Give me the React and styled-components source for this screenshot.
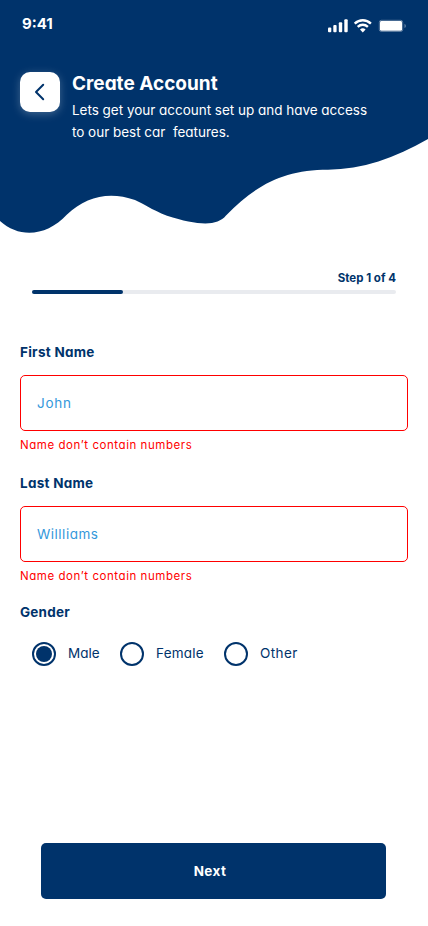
import React, { useState } from "react";
import styled, { createGlobalStyle } from "styled-components";

const navy = "#00336b";

const GlobalStyle = createGlobalStyle`
  *, *::before, *::after { box-sizing: border-box; }
  body {
    margin: 0;
    background: #fff;
    color: ${navy};
    font-family: Gilroy, Inter, "Liberation Sans", sans-serif;
    font-feature-settings: "cv11";
  }
`;

const Screen = styled.div`
  width: 428px;
  height: 926px;
  display: flex;
  flex-direction: column;
  overflow: hidden;
`;

const Header = styled.header`
  position: relative;
  height: 234px;
  flex: none;
  color: #fff;
`;

const Wave = styled.svg`
  position: absolute;
  inset: 0;
  z-index: -1;
`;

const StatusBar = styled.div`
  display: flex;
  justify-content: space-between;
  height: 48px;
  padding: 14px 21px 0 22px;
`;

const Clock = styled.time`
  font-size: 15px;
  font-weight: 700;
  line-height: 20px;
`;

const StatusIcons = styled.svg`
  display: block;
  margin-top: 4px;
`;

const Intro = styled.div`
  display: flex;
  gap: 12px;
  padding: 24px 20px 0;
`;

const BackButton = styled.button`
  width: 40px;
  height: 40px;
  flex: none;
  display: grid;
  place-items: center;
  padding: 0;
  border: 0;
  border-radius: 10px;
  background: #fff;
  box-shadow: 0 2px 8px rgba(255, 255, 255, 0.25);
`;

const Heading = styled.h1`
  margin: 0;
  font-size: 19px;
  font-weight: 700;
  line-height: 24px;
`;

const Subtitle = styled.p`
  margin: 3px 0 0;
  font-size: 13.5px;
  line-height: 22px;
  letter-spacing: -0.02px;
  white-space: pre;
`;

const Progress = styled.section`
  margin: 36px 32px 0;
`;

const StepLabel = styled.div`
  font-size: 11.5px;
  font-weight: 700;
  line-height: 16px;
  text-align: right;
`;

const Track = styled.div`
  height: 4px;
  margin-top: 4px;
  border-radius: 2px;
  background: #e9ebef;
`;

const Fill = styled.div`
  width: 25%;
  height: 100%;
  border-radius: 2px;
  background: ${navy};
`;

const Form = styled.form`
  flex: 1;
  display: flex;
  flex-direction: column;
  padding: 50px 20px 27px;
`;

const Field = styled.div`
  display: flex;
  flex-direction: column;
  height: 131px;
`;

const Label = styled.label`
  font-size: 13.5px;
  font-weight: 700;
  line-height: 16px;
  letter-spacing: 0.27px;
`;

const Input = styled.input`
  width: 100%;
  height: 56px;
  margin-top: 15px;
  padding: 0 16px;
  border: 1px solid #f00;
  border-radius: 5px;
  outline: 0;
  background: #fff;
  font: inherit;
  font-size: 13.5px;
  font-feature-settings: inherit;
  letter-spacing: ${(p) => p.$tracking}px;
  &::placeholder { color: #3498db; opacity: 1; }
`;

const ErrorText = styled.div`
  margin-top: 6px;
  color: #f00;
  font-size: 11.5px;
  line-height: 16px;
  letter-spacing: 0.55px;
`;

const GroupLabel = styled.div`
  margin-top: -2px;
  font-size: 13.5px;
  font-weight: 700;
  line-height: 16px;
  letter-spacing: 0.2px;
`;

const Options = styled.div`
  display: grid;
  grid-template-columns: 88px 104px auto;
  margin: 22px 0 0 12px;
`;

const Option = styled.label`
  display: flex;
  align-items: center;
  gap: 12px;
  font-size: 13.5px;
  line-height: 22px;
  letter-spacing: ${(p) => p.$tracking}px;
`;

const OptionText = styled.span`
  margin-top: -2px;
`;

const Radio = styled.input`
  appearance: none;
  width: 24px;
  height: 24px;
  flex: none;
  display: grid;
  place-items: center;
  margin: 0;
  border: 2px solid ${navy};
  border-radius: 50%;
  &:checked::before {
    content: "";
    width: 16px;
    height: 16px;
    border-radius: 50%;
    background: ${navy};
  }
`;

const NextButton = styled.button`
  height: 56px;
  margin: auto 22px 0 21px;
  padding: 0 7px 0 0;
  border: 0;
  border-radius: 5px;
  background: ${navy};
  color: #fff;
  font: inherit;
  font-size: 13.5px;
  font-weight: 700;
  letter-spacing: 0.4px;
`;

function NameField({ id, label, placeholder, tracking }) {
  return (
    <Field>
      <Label htmlFor={id}>{label}</Label>
      <Input id={id} placeholder={placeholder} $tracking={tracking} />
      <ErrorText>Name don’t contain numbers</ErrorText>
    </Field>
  );
}

const genders = [
  { name: "Male", tracking: 0 },
  { name: "Female", tracking: 0.2 },
  { name: "Other", tracking: 0.4 },
];

export default function App() {
  const [gender, setGender] = useState("Male");
  return (
    <>
      <GlobalStyle />
      <Screen>
        <Header>
          <Wave width="428" height="234" viewBox="0 0 428 234">
            <path
              fill={navy}
              d="M0 0H428V139C395 158 362 169.5 328 169.7C285 170 258 183 226 215.5C217 226.5 198 225.5 167 215.7C151 209.5 143 203.5 135 200C110 191 86 196 67 214.5C47 236 20 239 0 221Z"
            />
          </Wave>
          <StatusBar>
            <Clock>9:41</Clock>
            <StatusIcons width="80" height="16" viewBox="327 18 80 16">
              <g fill="#fff">
                <rect x="328" y="27.6" width="3.3" height="4.6" rx="1" />
                <rect x="333.3" y="25" width="3.3" height="7.2" rx="1" />
                <rect x="338.8" y="22.2" width="3.4" height="10" rx="1" />
                <rect x="344.3" y="19.3" width="3.4" height="12.9" rx="1" />
                <rect x="380" y="21" width="22" height="9.8" rx="1.4" />
              </g>
              <rect x="379.3" y="20.3" width="23.4" height="11.2" rx="2" fill="none" stroke="#fff" strokeOpacity="0.35" />
              <path d="M404.5 23.8v4.2q1.4-.7 1.4-2.1t-1.4-2.1z" fill="#fff" fillOpacity="0.4" />
              <g fill="none" stroke="#fff" strokeWidth="2.4">
                <path d="M354.7 23.6Q358.3 20.2 362.8 20.2T370.9 23.6" />
                <path d="M357.7 26.8Q360 24.7 362.8 24.7T367.9 26.8" />
              </g>
              <path d="M360 29.5Q362.8 27.1 365.6 29.5L362.8 32.4Z" fill="#fff" />
            </StatusIcons>
          </StatusBar>
          <Intro>
            <BackButton aria-label="Back">
              <svg width="40" height="40" viewBox="0 0 40 40" fill="none">
                <path d="M23.2 12.8L16 20L23.2 27.2" stroke={navy} strokeWidth="2" strokeLinecap="round" strokeLinejoin="round" />
              </svg>
            </BackButton>
            <div>
              <Heading>Create Account</Heading>
              <Subtitle>{"Lets get your account set up and have access\nto our best car  features."}</Subtitle>
            </div>
          </Intro>
        </Header>
        <Progress>
          <StepLabel>Step 1 of 4</StepLabel>
          <Track>
            <Fill />
          </Track>
        </Progress>
        <Form onSubmit={(e) => e.preventDefault()}>
          <NameField id="first" label="First Name" placeholder="John" tracking={0.7} />
          <NameField id="last" label="Last Name" placeholder="Willliams" tracking={0.5} />
          <GroupLabel>Gender</GroupLabel>
          <Options>
            {genders.map(({ name, tracking }) => (
              <Option key={name} $tracking={tracking}>
                <Radio type="radio" name="gender" checked={gender === name} onChange={() => setGender(name)} />
                <OptionText>{name}</OptionText>
              </Option>
            ))}
          </Options>
          <NextButton>Next</NextButton>
        </Form>
      </Screen>
    </>
  );
}
